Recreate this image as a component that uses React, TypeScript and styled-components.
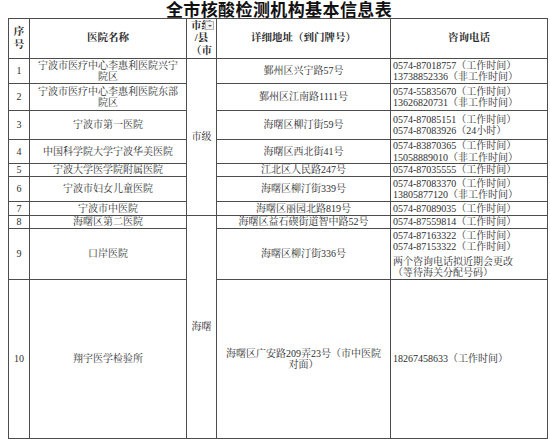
import React from 'react';
import styled, { createGlobalStyle } from 'styled-components';

const GlobalStyle = createGlobalStyle`
  html, body {
    margin: 0;
    padding: 0;
    background: #ffffff;
  }
  body {
    font-family: "Liberation Serif", "Noto Serif CJK SC", "Noto Sans CJK SC", serif;
  }
`;

type Row = {
  no: string;
  name: string[];
  addr: string[];
  phones: string[];
  note?: string[];
  h: number;
};

const rows: Row[] = [
  {
    no: '1',
    name: ['宁波市医疗中心李惠利医院兴宁', '院区'],
    addr: ['鄞州区兴宁路57号'],
    phones: ['0574-87018757（工作时间）', '13738852336（非工作时间）'],
    h: 25,
  },
  {
    no: '2',
    name: ['宁波市医疗中心李惠利医院东部', '院区'],
    addr: ['鄞州区江南路1111号'],
    phones: ['0574-55835670（工作时间）', '13626820731（非工作时间）'],
    h: 27,
  },
  {
    no: '3',
    name: ['宁波市第一医院'],
    addr: ['海曙区柳汀街59号'],
    phones: ['0574-87085151（工作时间）', '0574-87083926（24小时）'],
    h: 29,
  },
  {
    no: '4',
    name: ['中国科学院大学宁波华美医院'],
    addr: ['海曙区西北街41号'],
    phones: ['0574-83870365（工作时间）', '15058889010（非工作时间）'],
    h: 24,
  },
  {
    no: '5',
    name: ['宁波大学医学院附属医院'],
    addr: ['江北区人民路247号'],
    phones: ['0574-87035555（工作时间）'],
    h: 13,
  },
  {
    no: '6',
    name: ['宁波市妇女儿童医院'],
    addr: ['海曙区柳汀街339号'],
    phones: ['0574-87083370（工作时间）', '13805877120（非工作时间）'],
    h: 25,
  },
  {
    no: '7',
    name: ['宁波市中医院'],
    addr: ['海曙区丽园北路819号'],
    phones: ['0574-87089035（工作时间）'],
    h: 14,
  },
  {
    no: '8',
    name: ['海曙区第二医院'],
    addr: ['海曙区益石碶街道智中路52号'],
    phones: ['0574-87559814（工作时间）'],
    h: 13,
  },
  {
    no: '9',
    name: ['口岸医院'],
    addr: ['海曙区柳汀街336号'],
    phones: ['0574-87163322（工作时间）', '0574-87153322（工作时间）'],
    note: ['两个咨询电话拟近期会更改', '（等待海关分配号码）'],
    h: 51,
  },
  {
    no: '10',
    name: ['翔宇医学检验所'],
    addr: ['海曙区广安路209弄23号（市中医院', '对面）'],
    phones: ['18267458633（工作时间）'],
    h: 159,
  },
];

const Page = styled.div`
  padding: 0 3px 0 8px;
  width: 539px;
`;

const Title = styled.h1`
  margin: 0;
  height: 18px;
  font-family: "Noto Sans CJK SC", "Noto Sans", sans-serif;
  font-size: 17px;
  letter-spacing: 0.4px;
  line-height: 18px;
  font-weight: 700;
  color: #111111;
  text-align: center;
  padding-left: 3px;
`;

const Table = styled.table`
  width: 539px;
  table-layout: fixed;
  border-collapse: collapse;
`;

const Col = styled.col<{ $w: number }>`
  width: ${({ $w }) => $w}px;
`;

const Tr = styled.tr<{ $h: number }>`
  height: ${({ $h }) => $h}px;
`;

const HeadCell = styled.th`
  position: relative;
  border: 1px solid #4d4d4d;
  padding: 0;
  font-size: 10.5px;
  line-height: 12.5px;
  font-weight: 700;
  color: #2a2a2a;
  text-align: center;
  vertical-align: middle;
  overflow: hidden;
`;

const Cell = styled.td<{ $align?: 'left' | 'center' }>`
  border: 1px solid #4d4d4d;
  padding: ${({ $align }) => ($align === 'left' ? '0 0 0 2px' : '0 2px')};
  font-size: 10px;
  line-height: 11.5px;
  color: #2e2e2e;
  text-align: ${({ $align }) => $align ?? 'center'};
  vertical-align: middle;
  white-space: nowrap;
  overflow: hidden;
`;

const Line = styled.div<{ $gap?: number }>`
  margin-top: ${({ $gap }) => $gap ?? 0}px;
`;

const FilterButton = styled.span`
  position: absolute;
  top: 2px;
  right: 2px;
  width: 7px;
  height: 7px;
  border: 1px solid #b4b4b4;
  background: #f1f1f1;
  display: flex;
  align-items: center;
  justify-content: center;

  &::after {
    content: '';
    border-left: 2px solid transparent;
    border-right: 2px solid transparent;
    border-top: 2px solid #555555;
  }
`;

const Lines = ({ items, gap }: { items: string[]; gap?: number }) => (
  <>
    {items.map((t, i) => (
      <Line key={t} $gap={i === 0 ? gap : 0}>
        {t}
      </Line>
    ))}
  </>
);

const App = () => (
  <Page>
    <GlobalStyle />
    <Title>全市核酸检测机构基本信息表</Title>
    <Table>
      <colgroup>
        <Col $w={21} />
        <Col $w={157} />
        <Col $w={30} />
        <Col $w={174} />
        <Col $w={157} />
      </colgroup>
      <thead>
        <Tr $h={40}>
          <HeadCell>
            序<br />号
          </HeadCell>
          <HeadCell>医院名称</HeadCell>
          <HeadCell>
            市级
            <br />/县
            <br />（市
            <FilterButton />
          </HeadCell>
          <HeadCell>详细地址（到门牌号）</HeadCell>
          <HeadCell>咨询电话</HeadCell>
        </Tr>
      </thead>
      <tbody>
        {rows.map((r, i) => (
          <Tr key={r.no} $h={r.h}>
            <Cell>{r.no}</Cell>
            <Cell>
              <Lines items={r.name} />
            </Cell>
            {i === 0 && <Cell rowSpan={7}>市级</Cell>}
            {i === 7 && <Cell rowSpan={3}>海曙</Cell>}
            <Cell>
              <Lines items={r.addr} />
            </Cell>
            <Cell $align="left">
              <Lines items={r.phones} />
              {r.note && <Lines items={r.note} gap={3} />}
            </Cell>
          </Tr>
        ))}
      </tbody>
    </Table>
  </Page>
);

export default App;
